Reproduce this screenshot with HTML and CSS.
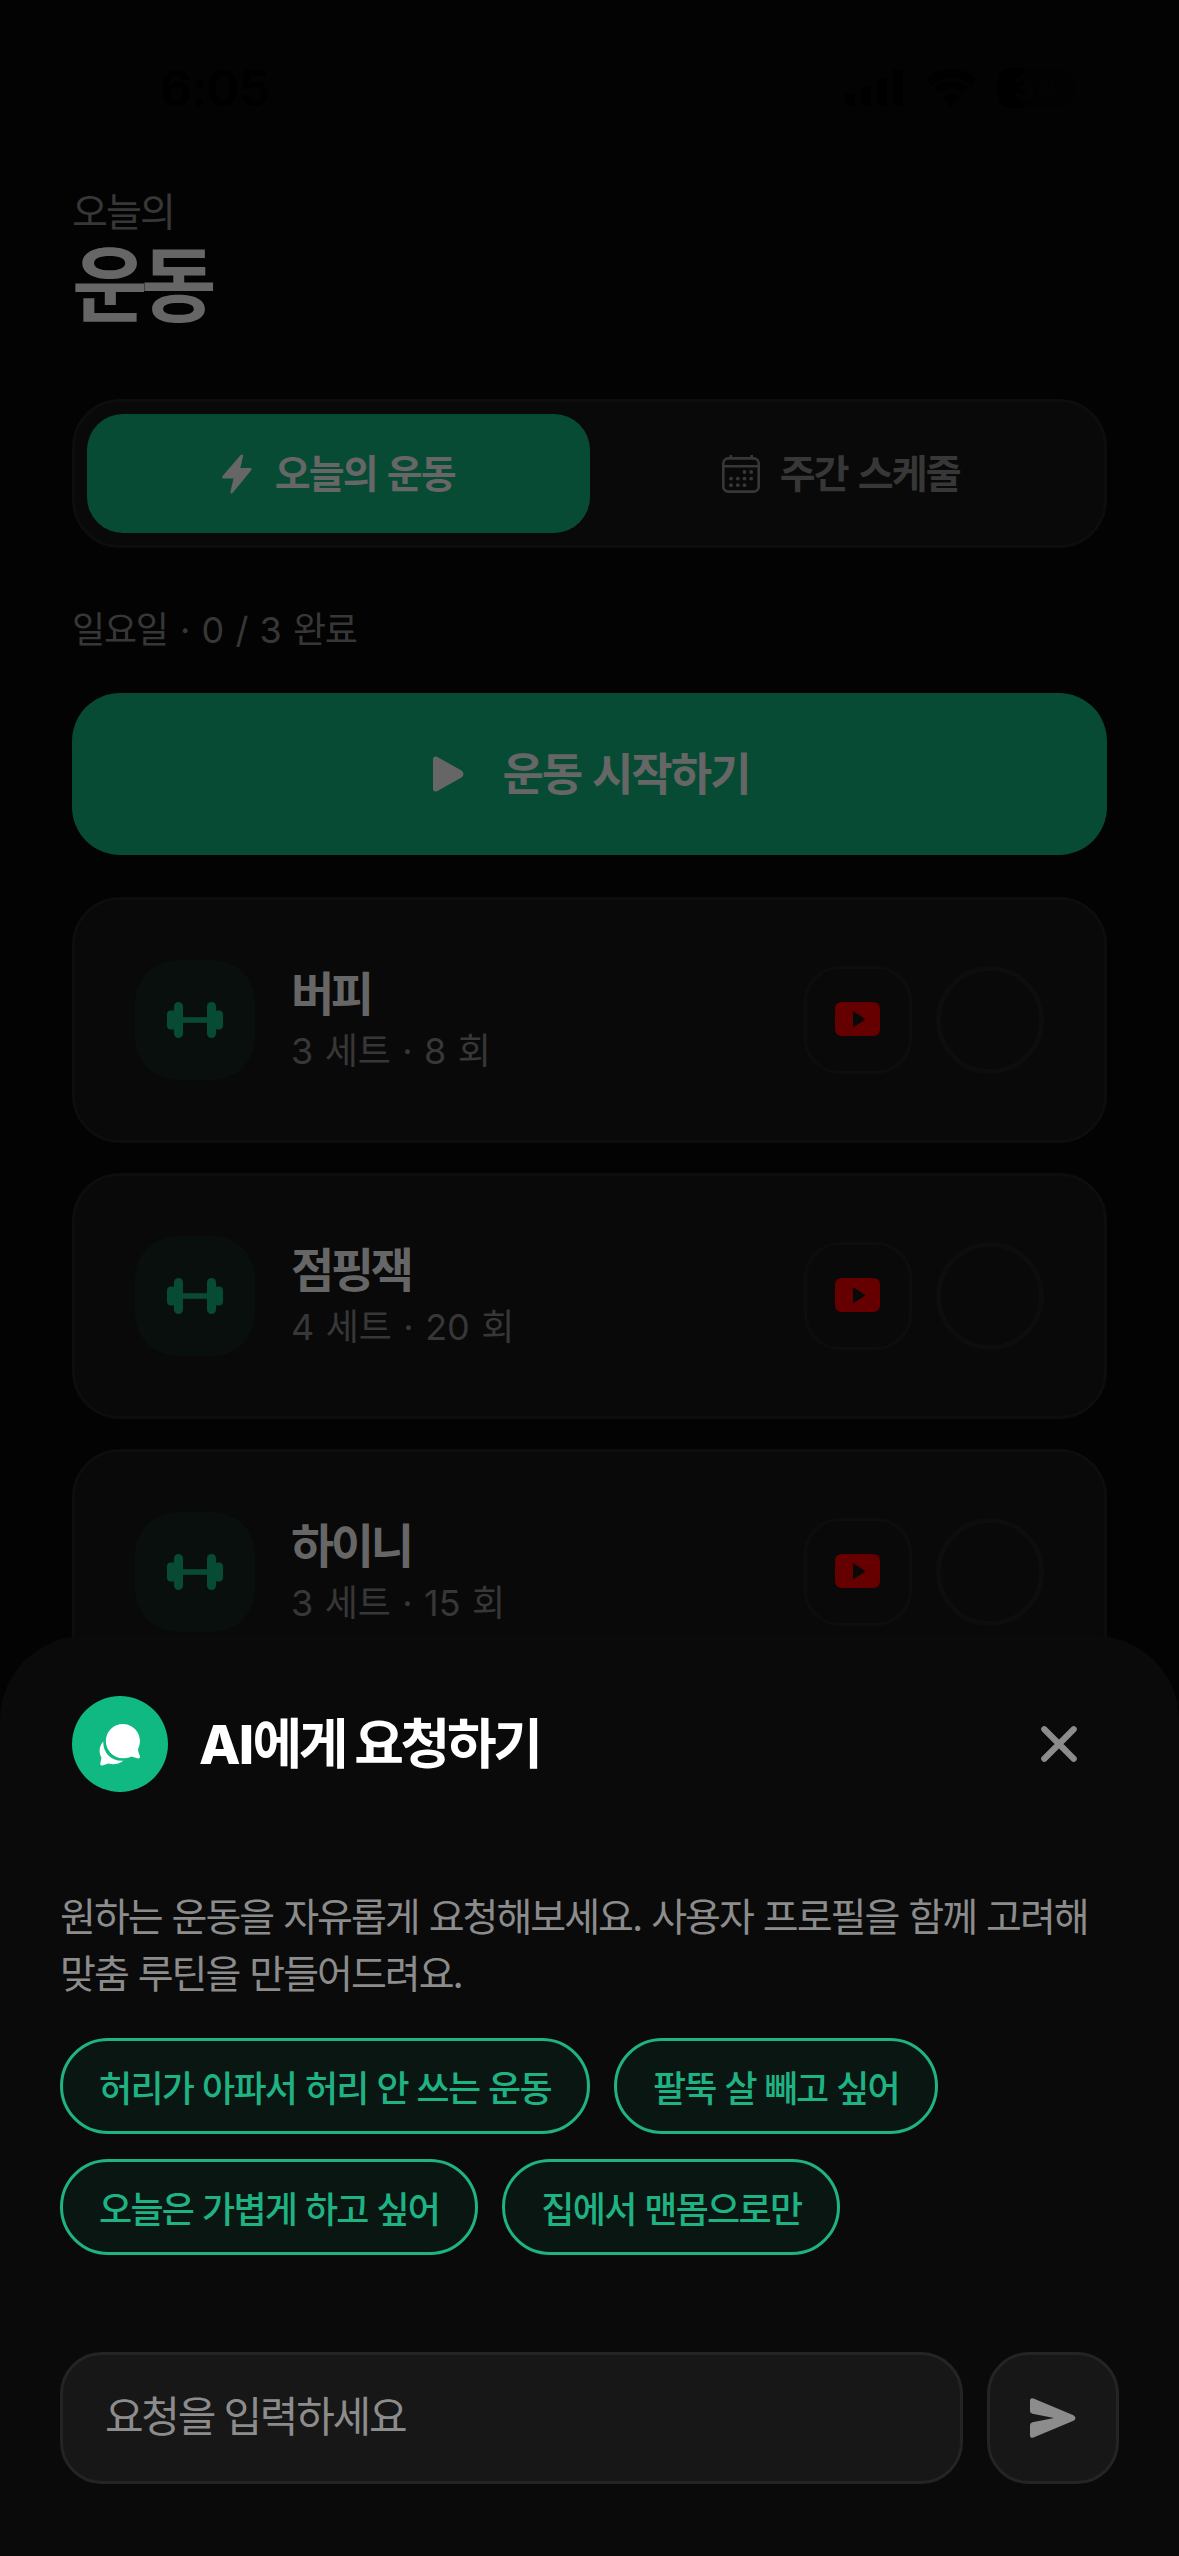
FILE: index.html
```html
<!DOCTYPE html>
<html lang="ko">
<head>
<meta charset="utf-8">
<meta name="viewport" content="width=device-width, initial-scale=1">
<title>오늘의 운동</title>
<link rel="stylesheet" href="styles.css">
</head>
<body>
<svg class="defs" width="0" height="0" aria-hidden="true">
  <symbol id="dumbbell" viewBox="0 0 56 36">
    <rect x="0" y="8.500" width="9" height="19" rx="4"/>
    <rect x="47" y="8.500" width="9" height="19" rx="4"/>
    <rect x="7" y="0" width="9" height="36" rx="4.500"/>
    <rect x="40" y="0" width="9" height="36" rx="4.500"/>
    <rect x="14" y="15.200" width="28" height="5.600"/>
  </symbol>
  <symbol id="video" viewBox="0 0 45 34">
    <path fill-rule="evenodd" d="M7 0H38Q45 0 45 7V27Q45 34 38 34H7Q0 34 0 27V7Q0 0 7 0ZM18 9V25.500L30.500 17.200Z"/>
  </symbol>
</svg>

<div class="screen">
  <header class="status">
    <span class="time">6:05</span>
    <div class="status-icons">
      <svg width="59" height="38" viewBox="0 0 59 38"><rect y="24" width="10" height="13" rx="3"/><rect x="16" y="17" width="10" height="20" rx="3"/><rect x="32" y="9" width="10" height="28" rx="3"/><rect x="48" width="10" height="37" rx="3"/></svg>
      <svg width="50" height="38" viewBox="0 0 50 38"><path d="M25 0C15 0 6 4 0 10L5 16C16 6 34 6 45 16L50 10C44 4 35 0 25 0ZM25 13C18 13 12 15 8 19L13 24C20 18 30 18 37 24L42 19C38 15 32 13 25 13ZM25 25C21 25 18 27 16 29L25 38L34 29C32 27 29 25 25 25Z"/></svg>
      <span class="battery">34</span>
    </div>
  </header>

  <main class="page">
    <div class="heading">
      <p class="eyebrow">오늘의</p>
      <h1 class="page-title">운동</h1>
    </div>

    <nav class="tabs">
      <button class="tab tab-active">
        <svg width="30" height="40" viewBox="0 0 30 40"><path d="M19.500 0.500Q21.500 0 21 2.500L18.300 14H28.500Q30.500 14.500 29 16.500L11 38.500Q8 41 8.500 37.500L11.500 24.500H1.500Q-.8 24 .8 21.800L18 1.800Q18.700 .8 19.500 .5Z"/></svg>
        <span>오늘의 운동</span>
      </button>
      <button class="tab tab-week">
        <svg width="38" height="38" viewBox="0 0 38 38"><g fill="none" stroke="currentColor" stroke-width="2.600"><rect x="1.300" y="3.400" width="35.400" height="33.200" rx="5"/><path d="M1.300 11.300H36.700M8.800 0V4M29.700 0V4"/></g><g><circle cx="22.500" cy="17" r="1.900"/><circle cx="29.200" cy="17" r="1.900"/><circle cx="9" cy="23.600" r="1.900"/><circle cx="15.800" cy="23.600" r="1.900"/><circle cx="22.500" cy="23.600" r="1.900"/><circle cx="29.200" cy="23.600" r="1.900"/><circle cx="9" cy="30.200" r="1.900"/><circle cx="15.800" cy="30.200" r="1.900"/><circle cx="22.500" cy="30.200" r="1.900"/></g></svg>
        <span>주간 스케줄</span>
      </button>
    </nav>

    <p class="progress">일요일 · 0 / 3 완료</p>

    <button class="start">
      <svg width="31" height="36" viewBox="0 0 31 36"><path d="M0 3Q0-.5 4 .8L28.500 14.500Q32.500 18 28.500 21.500L4 35.200Q0 36.500 0 33Z"/></svg>
      <span>운동 시작하기</span>
    </button>

    <section class="list">
      <article class="card">
        <div class="card-icon"><svg width="56" height="36"><use href="#dumbbell"/></svg></div>
        <div class="card-text"><h2 class="card-title">버피</h2><p class="card-sub">3 세트 · 8 회</p></div>
        <button class="video" aria-label="영상"><svg width="45" height="34"><use href="#video"/></svg></button>
        <button class="check" aria-label="완료"></button>
      </article>
      <article class="card">
        <div class="card-icon"><svg width="56" height="36"><use href="#dumbbell"/></svg></div>
        <div class="card-text"><h2 class="card-title">점핑잭</h2><p class="card-sub">4 세트 · 20 회</p></div>
        <button class="video" aria-label="영상"><svg width="45" height="34"><use href="#video"/></svg></button>
        <button class="check" aria-label="완료"></button>
      </article>
      <article class="card">
        <div class="card-icon"><svg width="56" height="36"><use href="#dumbbell"/></svg></div>
        <div class="card-text"><h2 class="card-title">하이니</h2><p class="card-sub">3 세트 · 15 회</p></div>
        <button class="video" aria-label="영상"><svg width="45" height="34"><use href="#video"/></svg></button>
        <button class="check" aria-label="완료"></button>
      </article>
    </section>
  </main>

  <section class="sheet">
    <header class="sheet-head">
      <div class="avatar">
        <svg width="43" height="43" viewBox="0 0 44 44"><path d="M24.500 1A17.500 17.500 0 0 1 40 26.500C39.500 28 41.500 32.500 42 34.500Q42 36.500 40 36.300L33 34.400C31 35.500 28 36.200 24.500 36A17.500 17.500 0 0 1 24.500 1Z"/><path d="M4.500 19C3.500 28 11 39.500 25 38.700C20 42.500 13.500 43 9.500 41.500L3.500 43.500Q1 43.700 1.300 41.500L2.500 35.500C-.5 30 0 23.500 4.500 19Z"/></svg>
      </div>
      <h2 class="sheet-title"><span class="latin">AI</span>에게 요청하기</h2>
      <button class="close" aria-label="닫기"><svg width="36" height="36" viewBox="0 0 36 36"><path d="M3.300 3.300L32.700 32.700M32.700 3.300L3.300 32.700" fill="none" stroke="currentColor" stroke-width="6.200" stroke-linecap="round"/></svg></button>
    </header>
    <p class="description">원하는 운동을 자유롭게 요청해보세요. 사용자 프로필을 함께 고려해<br>맞춤 루틴을 만들어드려요.</p>
    <div class="chips">
      <button class="chip">허리가 아파서 허리 안 쓰는 운동</button>
      <button class="chip">팔뚝 살 빼고 싶어</button>
      <button class="chip">오늘은 가볍게 하고 싶어</button>
      <button class="chip">집에서 맨몸으로만</button>
    </div>
    <div class="composer">
      <div class="field">요청을 입력하세요</div>
      <button class="send" aria-label="보내기"><svg width="46" height="40" viewBox="0 0 46 40"><path d="M0 3Q0-.8 3.500 .5L43.500 17.200Q47.500 20 43.500 22.800L3.500 39.500Q0 40.800 0 37V27Q0 25 2.500 24.300L24 20L2.500 15.700Q0 15 0 13Z"/></svg></button>
    </div>
  </section>
</div>
</body>
</html>
```
FILE: styles.css
```css
* {
  box-sizing: border-box;
}

body {
  margin: 0;
  background: #030303;
  font-family: "Inter", "Noto Sans CJK KR", sans-serif;
}

h1, h2, p {
  margin: 0;
}

button {
  margin: 0;
  padding: 0;
  border: 0;
  background: none;
  color: inherit;
  font: inherit;
}

svg {
  display: block;
  flex: none;
  fill: currentColor;
}

.defs {
  position: absolute;
}

.screen {
  position: relative;
  width: 1179px;
  height: 2556px;
  overflow: hidden;
  color: #666;
}

.status {
  display: flex;
  align-items: center;
  justify-content: space-between;
  height: 176px;
  padding: 0 105px 0 160px;
  color: #000;
}

.time {
  font-size: 50px;
  font-weight: 600;
  letter-spacing: -0.015em;
}

.status-icons {
  display: flex;
  align-items: center;
  gap: 22px;
}

.battery {
  width: 76px;
  height: 40px;
  border-radius: 13px;
  background: linear-gradient(90deg, #000 34%, #020202 34%);
  color: #030303;
  font-size: 34px;
  font-weight: 700;
  line-height: 40px;
  text-align: center;
}

.page {
  padding: 0 72px;
}

.heading {
  height: 223px;
  padding-top: 10px;
}

.eyebrow {
  color: #373737;
  font-size: 39px;
  line-height: 52px;
  letter-spacing: -1.9px;
}

.page-title {
  font-size: 82px;
  font-weight: 700;
  line-height: 96px;
  letter-spacing: -6.5px;
}

.tabs {
  display: grid;
  grid-template-columns: 1fr 1fr;
  height: 149px;
  padding: 12px;
  border: 3px solid #0d0d0d;
  border-radius: 48px;
  background: #090909;
}

.tab {
  display: flex;
  align-items: center;
  justify-content: center;
  gap: 23px;
  border-radius: 36px;
  color: #373737;
  font-size: 39px;
  font-weight: 600;
  letter-spacing: -1.9px;
  word-spacing: 2px;
}

.tab span,
.start span {
  padding-bottom: 5px;
}

.tab-active {
  background: #074b34;
  color: #666;
}

.tab-week {
  gap: 20px;
}

.progress {
  margin-top: 56px;
  color: #373737;
  font-size: 36px;
  line-height: 52px;
  letter-spacing: -1.2px;
  word-spacing: 3.4px;
}

.start {
  display: flex;
  align-items: center;
  justify-content: center;
  gap: 38px;
  width: 100%;
  height: 162px;
  margin-top: 37px;
  padding-left: 4px;
  border-radius: 48px;
  background: #074b34;
  font-size: 45px;
  font-weight: 700;
  letter-spacing: -2px;
  word-spacing: 2px;
}

.list {
  display: flex;
  flex-direction: column;
  gap: 30px;
  margin-top: 42px;
}

.card {
  display: flex;
  align-items: center;
  gap: 24px;
  height: 246px;
  padding: 0 60px;
  border: 3px solid #0d0d0d;
  border-radius: 48px;
  background: #090909;
}

.card-icon {
  display: flex;
  align-items: center;
  justify-content: center;
  width: 120px;
  height: 120px;
  margin-right: 12px;
  border-radius: 42px;
  background: #090f0d;
  color: #074b34;
}

.card-text {
  flex: 1;
  padding-top: 1px;
}

.card-title {
  font-size: 47px;
  font-weight: 700;
  line-height: 60px;
  letter-spacing: -3.4px;
}

.card-sub {
  color: #373737;
  font-size: 36px;
  line-height: 54px;
  letter-spacing: 0;
  word-spacing: 1.3px;
}

.video,
.check {
  display: flex;
  align-items: center;
  justify-content: center;
  width: 108px;
  height: 108px;
}

.video {
  padding: 0 2px 2px 0;
  border: 3px solid #0d0d0d;
  border-radius: 36px;
  color: #660000;
}

.check {
  border: 5px solid #0d0d0d;
  border-radius: 50%;
}

.sheet {
  position: absolute;
  right: 0;
  bottom: 0;
  left: 0;
  height: 920px;
  padding: 60px 60px 72px;
  border-radius: 84px 84px 0 0;
  background: #0a0a0a;
}

.sheet-head {
  display: flex;
  align-items: center;
  height: 96px;
  padding: 0 42px 0 12px;
  color: #fff;
}

.avatar {
  display: flex;
  align-items: center;
  justify-content: center;
  width: 96px;
  height: 96px;
  border-radius: 50%;
  background: #10b981;
}

.sheet-title {
  flex: 1;
  margin-left: 31px;
  padding-bottom: 7px;
  font-size: 54px;
  font-weight: 700;
  letter-spacing: -3.4px;
}

.latin {
  font-weight: 800;
  letter-spacing: -1.8px;
}

.close {
  color: #8c8c8c;
}

.description {
  margin-top: 96px;
  color: #8c8c8c;
  font-size: 39px;
  line-height: 57px;
  letter-spacing: -2px;
  word-spacing: 1px;
  white-space: nowrap;
}

.chips {
  display: flex;
  flex-wrap: wrap;
  gap: 25px 24px;
  margin-top: 36px;
}

.chip {
  height: 96px;
  padding: 0 36px 1px;
  border: 3px solid #1fb282;
  border-radius: 48px;
  background: #0a1612;
  color: #1fb282;
  font-size: 36px;
  font-weight: 500;
  letter-spacing: -1.7px;
  word-spacing: 0.8px;
}

.composer {
  display: flex;
  gap: 24px;
  margin-top: 97px;
}

.field,
.send {
  display: flex;
  align-items: center;
  height: 132px;
  border: 3px solid #242424;
  border-radius: 42px;
  background: #171717;
  color: #8c8c8c;
}

.field {
  flex: 1;
  padding: 0 42px 9px;
  font-size: 42px;
  letter-spacing: -2.3px;
}

.send {
  justify-content: center;
  width: 132px;
}
```
